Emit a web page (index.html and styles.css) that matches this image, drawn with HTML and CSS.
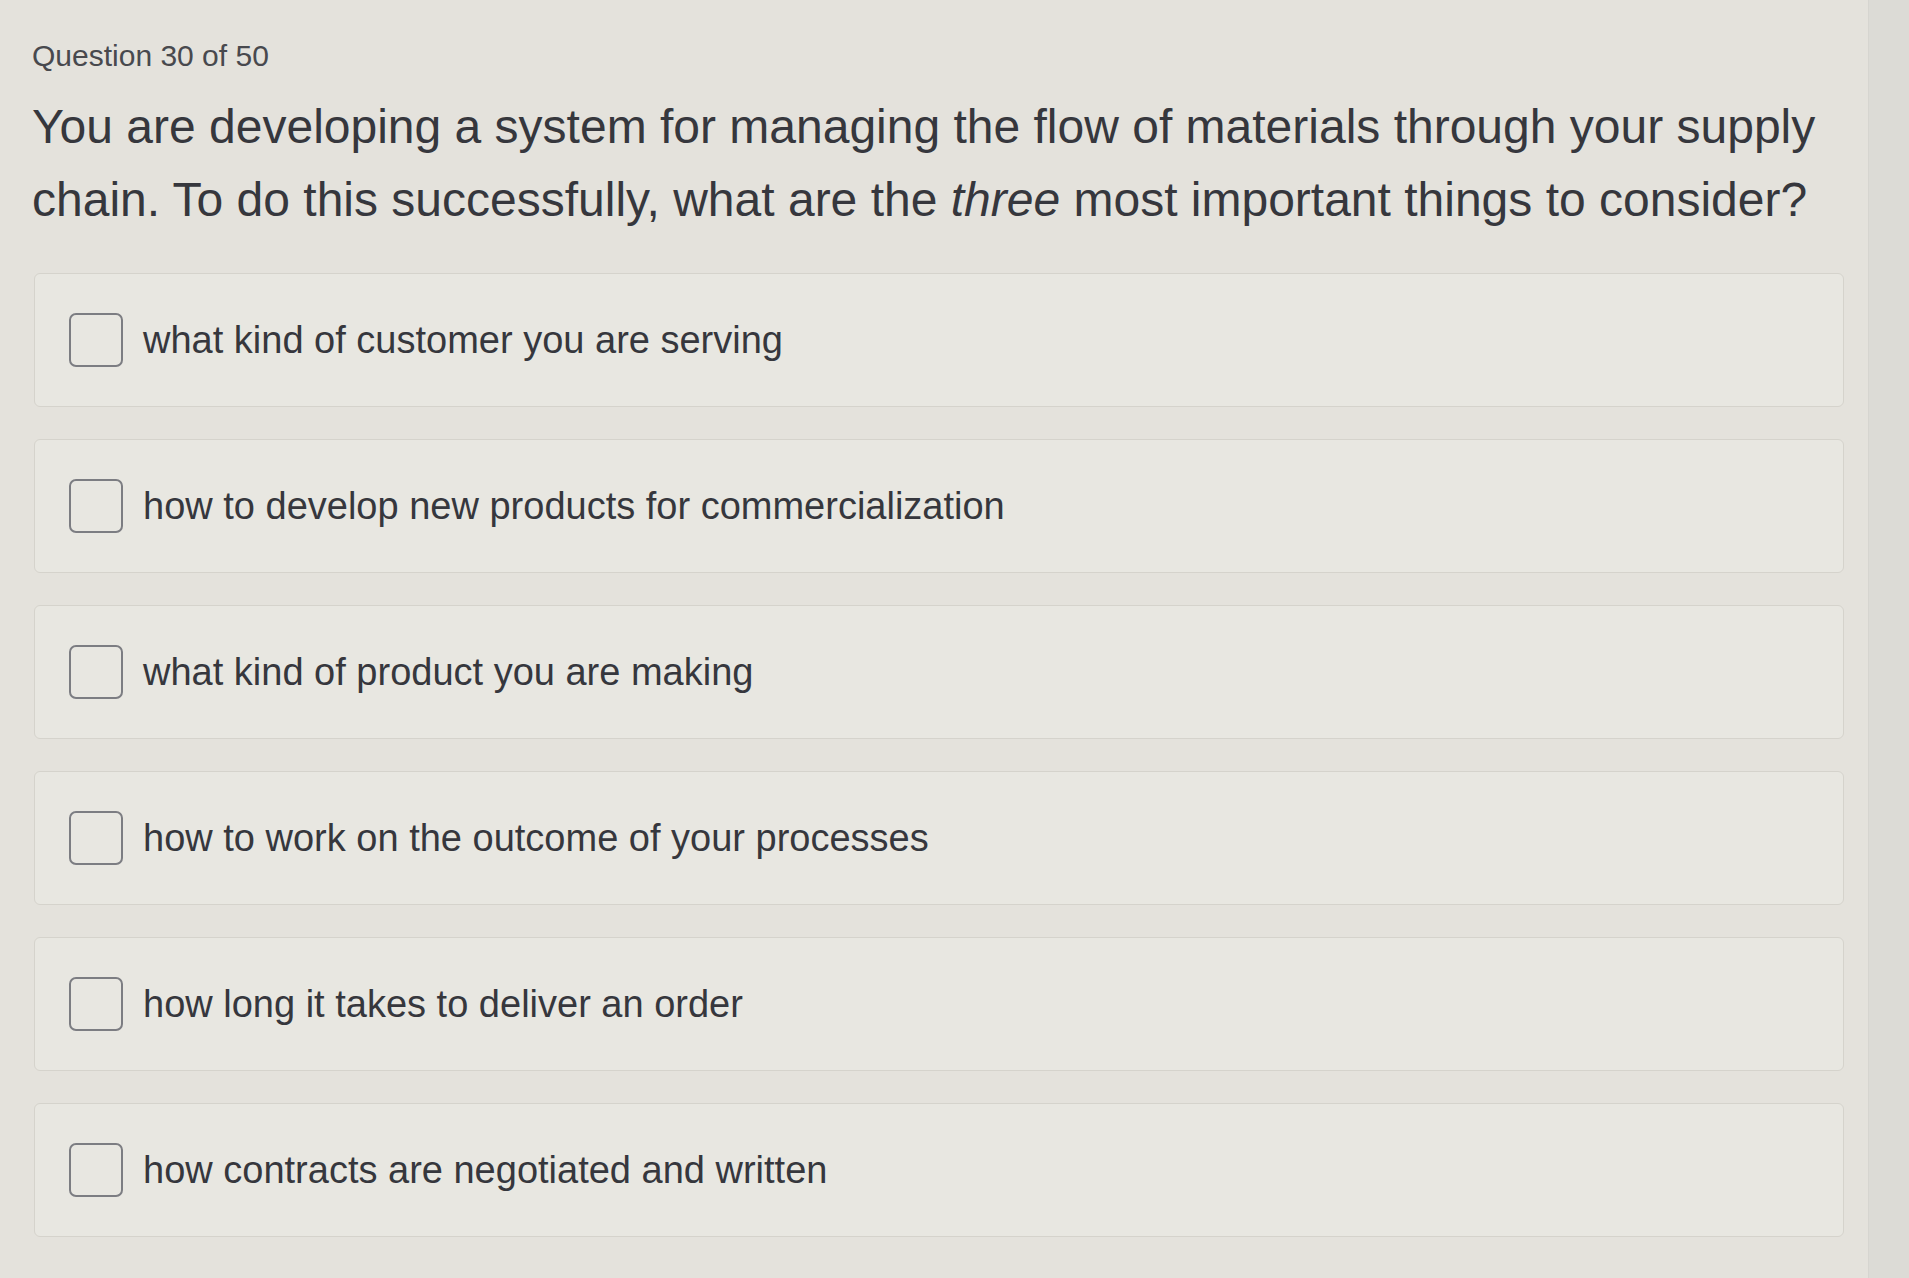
FILE: index.html
```html
<!DOCTYPE html>
<html lang="en">
<head>
<meta charset="utf-8">
<title>Question 30 of 50</title>
<link rel="stylesheet" href="styles.css">
</head>
<body>
<div class="screen">
  <main class="quiz">
    <div class="counter">Question 30 of 50</div>
    <h1 class="prompt">You are developing a system for managing the flow of materials through your supply<br>chain. To do this successfully, what are the <em>three</em> most important things to consider?</h1>
    <ul class="options">
      <li class="option"><span class="check"></span><span class="label">what kind of customer you are serving</span></li>
      <li class="option"><span class="check"></span><span class="label">how to develop new products for commercialization</span></li>
      <li class="option"><span class="check"></span><span class="label">what kind of product you are making</span></li>
      <li class="option"><span class="check"></span><span class="label">how to work on the outcome of your processes</span></li>
      <li class="option"><span class="check"></span><span class="label">how long it takes to deliver an order</span></li>
      <li class="option"><span class="check"></span><span class="label">how contracts are negotiated and written</span></li>
    </ul>
  </main>
  <div class="edge"></div>
</div>
</body>
</html>
```
FILE: styles.css
```css
html, body {
  margin: 0;
  padding: 0;
  height: 100%;
  overflow: hidden;
}
body {
  background: #e4e2dc;
  font-family: "Liberation Sans", Arial, sans-serif;
  color: #3c3d43;
}
.screen {
  display: flex;
  height: 1278px;
}
.quiz {
  flex: 1;
  padding: 38px 24px 0 32px;
  display: flex;
  flex-direction: column;
}
.edge {
  width: 40px;
  background: #dcdbd6;
  border-left: 1px solid #d6d5d0;
}
.counter {
  font-size: 30px;
  line-height: 36px;
  color: #48494e;
}
.prompt {
  margin: 16px 0 0;
  font-size: 48px;
  line-height: 73px;
  font-weight: 400;
  color: #36373d;
  white-space: nowrap;
}
.prompt em {
  font-style: italic;
}
.options {
  list-style: none;
  margin: 37px 0 0;
  padding: 0;
  display: flex;
  flex-direction: column;
  gap: 32px;
}
.option {
  height: 134px;
  box-sizing: border-box;
  margin-left: 2px;
  border: 1.5px solid #d5d3cc;
  border-radius: 6px;
  background: #e8e7e1;
  display: flex;
  align-items: center;
  padding-left: 34px;
  gap: 20px;
}
.check {
  width: 54px;
  height: 54px;
  box-sizing: border-box;
  border: 2.5px solid #7c7d82;
  border-radius: 7px;
  flex: none;
}
.label {
  font-size: 38px;
  color: #36373d;
}
```
